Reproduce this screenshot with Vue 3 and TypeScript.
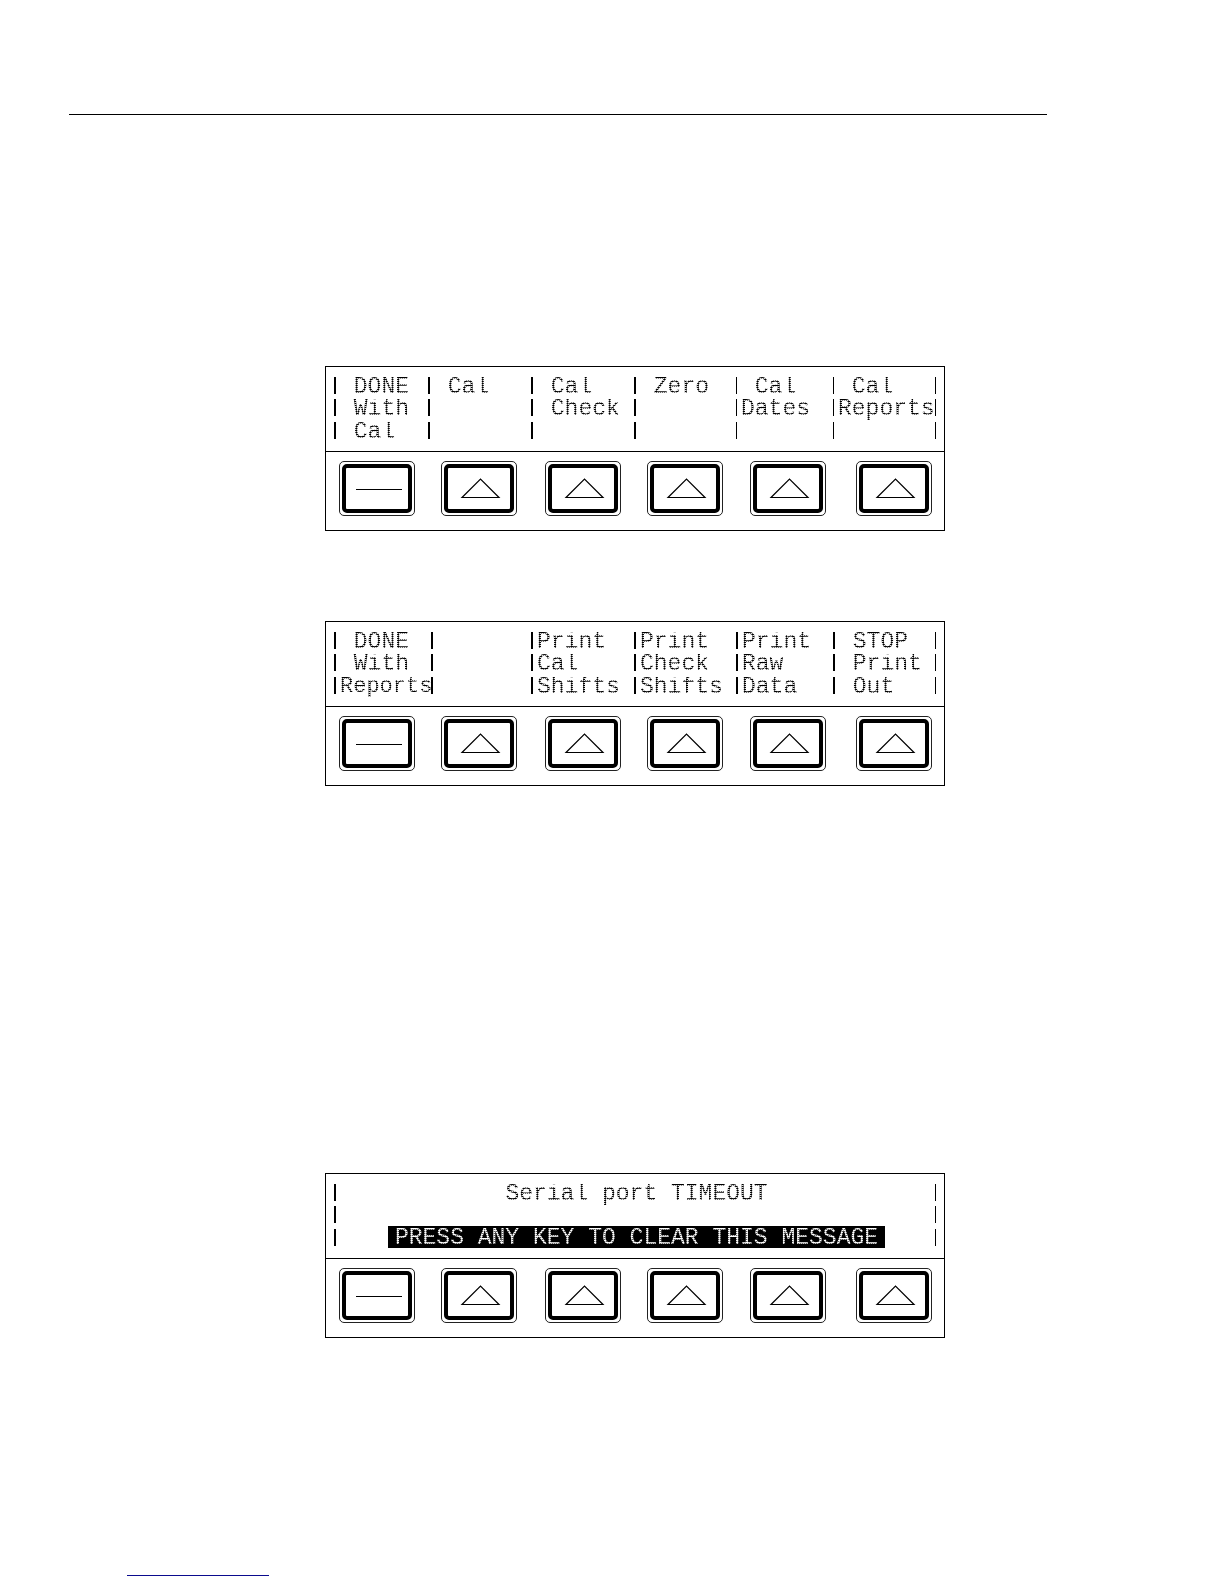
<script setup lang="ts">
interface Cell {
  lines: [string, string, string]
  tight?: number
}

interface Panel {
  id: string
  columns: number[]
  // index of the first separator drawn as a hairline
  thinFrom: number
  cells: Cell[]
}

const panels: Panel[] = [
  {
    id: 'cal',
    columns: [94, 103, 103, 102, 97, 103],
    thinFrom: 4,
    cells: [
      { lines: [' DONE', ' With', ' Cal'] },
      { lines: [' Cal', '', ''] },
      { lines: [' Cal', ' Check', ''] },
      { lines: [' Zero', '', ''] },
      { lines: [' Cal', 'Dates', ''] },
      { lines: [' Cal', 'Reports', ''] },
    ],
  },
  {
    id: 'reports',
    columns: [97, 100, 103, 102, 97, 103],
    thinFrom: 6,
    cells: [
      { lines: [' DONE', ' With', 'Reports'], tight: 2 },
      { lines: ['', '', ''] },
      { lines: ['Print', 'Cal', 'Shifts'] },
      { lines: ['Print', 'Check', 'Shifts'] },
      { lines: ['Print', 'Raw', 'Data'] },
      { lines: [' STOP', ' Print', ' Out'] },
    ],
  },
  { id: 'timeout', columns: [1], thinFrom: 6, cells: [] },
]

const keys = [1, 2, 3, 4, 5, 6]

function tracks(columns: number[]): string {
  return columns.map((c) => `minmax(0, ${c}fr)`).join(' ')
}
</script>

<template>
  <div class="page">
    <hr class="rule" />
    <main class="panels">
      <section v-for="panel in panels" :key="panel.id" class="panel" :class="panel.id">
        <div class="lcd" :style="{ gridTemplateColumns: tracks(panel.columns) }">
          <div
            v-for="(cell, c) in panel.cells"
            :key="c"
            class="cell"
            :class="{ thin: c >= panel.thinFrom }"
          >
            <div v-for="(line, r) in cell.lines" :key="r" class="line">
              <span class="dots" :class="{ tight: cell.tight === r }">{{ line }}</span>
            </div>
          </div>
          <div v-if="panel.id === 'timeout'" class="cell message">
            <div class="line"><span class="dots">Serial port TIMEOUT</span></div>
            <div class="line"></div>
            <div class="line">
              <strong class="inverse"><span class="dots">PRESS ANY KEY TO CLEAR THIS MESSAGE</span></strong>
            </div>
          </div>
        </div>
        <div class="keys">
          <button v-for="k in keys" :key="k" type="button" class="key" :aria-label="`Key ${k}`">
            <span class="cap">
              <svg width="46" height="22" viewBox="0 0 46 22" fill="none" stroke="#000" aria-hidden="true">
                <path v-if="k === 1" d="M0 11.5H46" />
                <path v-else d="M4 19.5L22.5 1L41 19.5Z" stroke-width="1.2" />
              </svg>
            </span>
          </button>
        </div>
      </section>
    </main>
    <hr class="foot" />
  </div>
</template>

<style>
body {
  margin: 0;
  background: #fff;
}
</style>

<style scoped>
.page {
  display: flex;
  flex-direction: column;
  color: #000;
  font-family: "Liberation Mono", monospace;
}

.rule {
  align-self: stretch;
  height: 1px;
  margin: 114px 177px 0 69px;
  border: 0;
  background: #000;
}

.panels {
  display: flex;
  flex-direction: column;
  margin: 251px 279px 0 325px;
}

.panel {
  border: 1px solid #000;
}

.panel.reports {
  margin-top: 90px;
}

.panel.timeout {
  margin-top: 387px;
}

.lcd {
  display: grid;
  height: 74px;
  padding: 10px 8px 0;
  border-bottom: 1px solid #000;
}

.cell {
  display: grid;
  grid-template-rows: 22px 23px 17px;
  align-content: start;
}

.line {
  height: 17px;
  padding-left: 4px;
  border-left: 2px solid #000;
  font-size: 23px;
  line-height: 20px;
  white-space: pre;
}

.cell.thin .line {
  border-left-width: 1px;
}

.cell:last-child .line {
  border-right: 1px solid #000;
}

.message .line {
  display: flex;
  align-items: flex-start;
  justify-content: center;
  padding-left: 2px;
}

/* two-pixel lattice that breaks the strokes into dots */
.dots {
  display: block;
  width: max-content;
  padding-bottom: 4px;
  mask-image: conic-gradient(#000 25%, #0002 25% 50%, #0009 50% 75%, #000 75%);
  mask-size: 2px 2px;
}

.tight {
  font-size: 22px;
}

.inverse {
  height: 22px;
  margin-top: -3px;
  padding: 0 7px;
  background: #000;
  color: #fff;
  font-weight: 400;
  line-height: 24px;
}

.inverse .dots {
  padding-bottom: 0;
  mask-image: conic-gradient(#000 25%, #0006 25% 50%, #000c 50% 75%, #000 75%);
}

.keys {
  display: grid;
  grid-template-columns: 102fr 104fr 102fr 103fr 106fr 76fr;
  padding: 9px 12px 14px 13px;
}

.key {
  box-sizing: border-box;
  width: 76px;
  height: 55px;
  padding: 2px;
  border: 1px solid #222;
  border-radius: 5px;
  background: #fff;
}

.cap {
  box-sizing: border-box;
  display: flex;
  align-items: center;
  justify-content: center;
  height: 100%;
  padding-left: 3px;
  border: 4px solid #000;
  border-radius: 5px;
}

.foot {
  width: 142px;
  height: 1px;
  margin: 237px 0 8px 127px;
  border: 0;
  background: #0b0b8e;
}
</style>
